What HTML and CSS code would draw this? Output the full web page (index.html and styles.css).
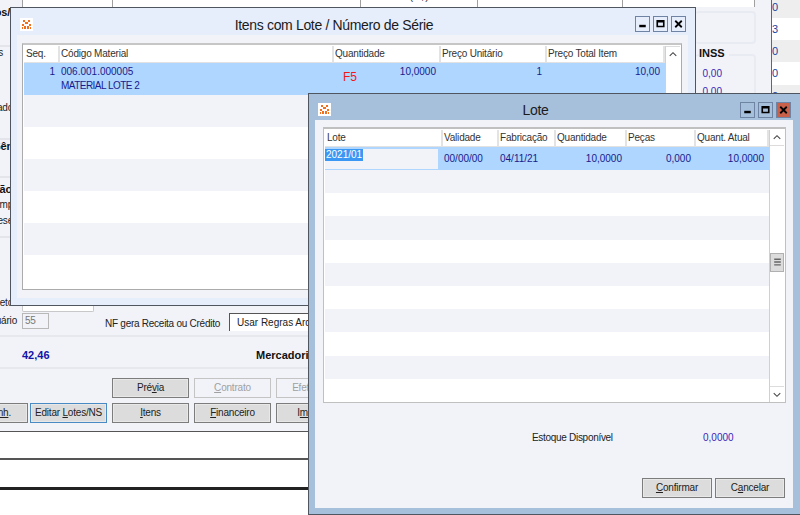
FILE: index.html
```html
<!DOCTYPE html>
<html lang="pt-BR">
<head>
<meta charset="utf-8">
<title>Lote</title>
<link rel="stylesheet" href="styles.css">
</head>
<body>
<div class="desktop">
  <div class="main">
    <section class="panel">
      <div class="topfields">
        <div class="tf tf1"></div>
        <div class="tf tf2"></div>
        <div class="tf tf3"><span class="tf-text">(R$)</span></div>
        <div class="tf tf4"></div>
        <div class="tf tf5"></div>
      </div>
      <div class="upper">
        <div class="frags">
          <div class="frag frag-a b">Impostos/</div>
          <div class="rule rule-a"></div>
          <div class="frag frag-b">Totais</div>
          <div class="frag frag-c">Parcelado</div>
          <div class="rule rule-c"></div>
          <div class="frag frag-d b">Gên</div>
          <div class="rule rule-d"></div>
          <div class="frag frag-e b">Situação</div>
          <div class="frag frag-f">Imp</div>
          <div class="frag frag-g">Rese</div>
          <div class="rule rule-g"></div>
          <div class="frag frag-h">Objeto</div>
        </div>
        <div class="stub"></div>
        <div class="side">
          <div class="gbox gbox-1"></div>
          <div class="gbox gbox-2">
            <div class="legend">INSS</div>
            <div class="val">0,00</div>
            <div class="val">0,00</div>
          </div>
        </div>
      </div>
      <div class="formrow">
        <span class="form-label">Usuário</span>
        <span class="mini-input">55</span>
        <span class="nf-label">NF gera Receita ou Crédito</span>
        <span class="select">Usar Regras Arquivo</span>
      </div>
      <div class="totals">
        <span class="tot-value">42,46</span>
        <span class="tot-label">Mercadorias</span>
      </div>
      <div class="actions">
        <span></span>
        <span></span>
        <button class="btn">Pré<u>v</u>ia</button>
        <button class="btn off"><u>C</u>ontrato</button>
        <button class="btn off">Efetivação</button>
        <button class="btn btn-cut">Ger. Fi<u>nh</u>.</button>
        <button class="btn focus">Editar <u>L</u>otes/NS</button>
        <button class="btn"><u>I</u>tens</button>
        <button class="btn"><u>F</u>inanceiro</button>
        <button class="btn">I<u>m</u>primir</button>
      </div>
    </section>
    <div class="stripes">
      <div class="st st-1 alt">0</div>
      <div class="st">3</div>
      <div class="st alt">0</div>
      <div class="st">0</div>
      <div class="st alt">0</div>
    </div>
  </div>
  <div class="strip"></div>
  <div class="strip strip-last"></div>

  <section class="win win-items">
    <header class="titlebar">
      <svg class="logo" viewBox="0 0 13 13"><rect width="13" height="13" fill="#fff"/><path d="M3 2h2v2H3zM8 2h2v2H8zM5 4h3v2H5zM2 6h2v2H2zM9 6h2v2H9zM4 8h2v3H4zM7 8h2v3H7zM2 9h1v2H2zM10 9h1v2h-1z" fill="#f36f1d"/></svg>
      <h1 class="wintitle">Itens com Lote / Número de Série</h1>
      <div class="controls">
        <span class="ctl"><svg viewBox="0 0 16 16"><rect x="4" y="9" width="8" height="3"/></svg></span>
        <span class="ctl"><svg viewBox="0 0 16 16"><path d="M3 3h10v9H3zM5 6v4h6V6z" fill-rule="evenodd"/></svg></span>
        <span class="ctl"><svg viewBox="0 0 16 16"><path d="M4 4l8 8M12 4l-8 8" stroke="#000" stroke-width="2.2"/></svg></span>
      </div>
    </header>
    <div class="winbody items-body">
      <div class="grid items-grid">
        <div class="tbl">
          <div class="row head">
            <div>Seq.</div><div>Código Material</div><div>Quantidade</div><div>Preço Unitário</div><div>Preço Total Item</div>
          </div>
          <div class="row data sel">
            <div class="num">1</div>
            <div>006.001.000005<br><span class="caps">MATERIAL LOTE 2</span></div>
            <div class="num qty">10,0000<span class="f5">F5</span></div>
            <div class="num">1</div>
            <div class="num">10,00</div>
          </div>
          <div class="row data alt"></div>
          <div class="row data"></div>
          <div class="row data alt"></div>
          <div class="row data"></div>
          <div class="row data alt"></div>
          <div class="row data last"></div>
        </div>
        <div class="sb">
          <span class="sb-btn"><svg viewBox="0 0 15 15"><path d="M4 9l3.5-3.500L11 9" fill="none" stroke="#444" stroke-width="1.100"/></svg></span>
        </div>
      </div>
    </div>
  </section>

  <section class="win win-lote">
    <header class="titlebar">
      <svg class="logo" viewBox="0 0 13 13"><rect width="13" height="13" fill="#fff"/><path d="M3 2h2v2H3zM8 2h2v2H8zM5 4h3v2H5zM2 6h2v2H2zM9 6h2v2H9zM4 8h2v3H4zM7 8h2v3H7zM2 9h1v2H2zM10 9h1v2h-1z" fill="#f36f1d"/></svg>
      <h1 class="wintitle">Lote</h1>
      <div class="controls">
        <span class="ctl"><svg viewBox="0 0 16 16"><rect x="4" y="9" width="8" height="3"/></svg></span>
        <span class="ctl"><svg viewBox="0 0 16 16"><path d="M3 3h10v9H3zM5 6v4h6V6z" fill-rule="evenodd"/></svg></span>
        <span class="ctl ctl-close"><svg viewBox="0 0 16 16"><path d="M4 4l8 8M12 4l-8 8" stroke="#000" stroke-width="2.2"/></svg></span>
      </div>
    </header>
    <div class="winbody lote-body">
      <div class="grid lote-grid">
        <div class="tbl">
          <div class="row head">
            <div>Lote</div><div>Validade</div><div>Fabricação</div><div>Quantidade</div><div>Peças</div><div>Quant. Atual</div>
          </div>
          <div class="row data sel">
            <div class="edit"><span class="picked">2021/01</span></div>
            <div>00/00/00</div>
            <div>04/11/21</div>
            <div class="num">10,0000</div>
            <div class="num">0,000</div>
            <div class="num">10,0000</div>
          </div>
          <div class="bands">
            <div class="band alt"></div><div class="band"></div>
            <div class="band alt"></div><div class="band"></div>
            <div class="band alt"></div><div class="band"></div>
            <div class="band alt"></div><div class="band"></div>
            <div class="band alt"></div><div class="band"></div>
          </div>
        </div>
        <div class="sb">
          <span class="sb-btn"><svg viewBox="0 0 15 15"><path d="M4 9l3.500-3.500L11 9" fill="none" stroke="#444" stroke-width="1.100"/></svg></span>
          <div class="sb-track">
            <span class="thumb"><svg viewBox="0 0 13 18"><path d="M3 5.500h7M3 8.500h7M3 11.500h7" stroke="#666" stroke-width="1.500"/></svg></span>
          </div>
          <span class="sb-btn"><svg viewBox="0 0 15 15"><path d="M4 6l3.500 3.500L11 6" fill="none" stroke="#444" stroke-width="1.100"/></svg></span>
        </div>
      </div>
      <div class="stock">
        <span class="stock-label">Estoque Disponível</span>
        <span class="stock-value">0,0000</span>
      </div>
      <div class="dlg-actions">
        <button class="btn"><u>C</u>onfirmar</button>
        <button class="btn">C<u>a</u>ncelar</button>
      </div>
    </div>
  </section>
</div>
</body>
</html>
```

FILE: styles.css
```css
* { box-sizing: border-box; }
html, body { margin: 0; padding: 0; background: #fff; }
body { font: 10px/14px "Liberation Sans", Arial, sans-serif; color: #222; letter-spacing: -0.2px; }
u { text-decoration: underline; }
.b { font-weight: bold; font-size: 11px; color: #111; }

.desktop { position: relative; width: 800px; height: 515px; overflow: hidden; background: #fff; }
.main { display: flex; height: 432px; }

/* background form */
.panel { width: 772px; height: 432px; background: #f1f3f9; border-right: 1px solid #666; border-bottom: 1px solid #555; display: flex; flex-direction: column; }
.topfields { display: flex; height: 7px; padding-left: 22px; flex: none; }
.tf { background: #fff; border-left: 1px solid #a0a0a0; height: 7px; overflow: hidden; }
.tf1 { width: 90px; }
.tf2 { width: 248px; }
.tf3 { width: 117px; text-align: center; }
.tf4 { width: 145px; }
.tf5 { width: 133px; border-right: 1px solid #a0a0a0; }
.tf-text { display: block; margin-top: -10px; }

.upper { display: flex; height: 304px; flex: none; }
.frags { width: 22px; flex: none; overflow: hidden; }
.frag { width: 13px; display: flex; justify-content: flex-end; white-space: nowrap; height: 12px; line-height: 12px; }
.rule { height: 2px; width: 22px; background: #e3e5ea; }
.frag-a { width: 10px; height: 10px; line-height: 10px; }
.rule-a { margin-top: 28px; }
.frag-b { width: 3px; }
.frag-c { margin-top: 43px; }
.rule-c { margin-top: 24px; }
.rule-d { margin-top: 24px; }
.frag-e { margin-top: 5px; width: 12px; }
.frag-f { margin-top: 4px; }
.frag-g { margin-top: 4px; }
.rule-g { margin-top: 9px; }
.frag-h { margin-top: 59px; }
.stub { width: 72px; height: 6px; align-self: flex-end; background: #fff; border: 1px solid #c8c8c8; border-top: 0; border-radius: 0 0 2px 2px; flex: none; margin-bottom: -1px; }
.side { margin-left: auto; width: 76px; padding-top: 4px; flex: none; }
.gbox { width: 61px; border: 2px solid #e9ebf2; border-radius: 4px; border-left: 0; }
.gbox-1 { height: 33px; }
.gbox-2 { height: 120px; margin-top: 10px; }
.legend { font-weight: bold; font-size: 11px; line-height: 12px; margin: -9px 0 0 4px; width: 30px; background: #f1f3f9; color: #111; letter-spacing: 0; }
.val { color: #3a1fb8; text-align: right; width: 27px; line-height: 18px; letter-spacing: 0; }
.gbox-2 .legend + .val { margin-top: 6px; }

.formrow { height: 26px; flex: none; display: flex; align-items: flex-start; padding-top: 2px; border-bottom: 2px solid #e6e8ee; overflow: hidden; position: relative; }
.form-label { width: 17px; flex: none; display: flex; justify-content: flex-end; white-space: nowrap; line-height: 16px; }
.mini-input { width: 27px; height: 16px; margin-left: 5px; border: 1px solid #b8b8b8; background: #f1f3f9; color: #777; padding-left: 2px; line-height: 14px; flex: none; }
.nf-label { margin-left: 56px; width: 124px; flex: none; line-height: 18px; padding-top: 2px; white-space: nowrap; letter-spacing: -0.26px; }
.select { width: 120px; height: 18px; border: 1px solid #555; border-bottom: 0; background: #fff; padding-left: 7px; line-height: 18px; white-space: nowrap; overflow: hidden; flex: none; letter-spacing: 0; }

.totals { height: 32px; flex: none; display: flex; align-items: center; padding: 6px 0 0 22px; border-bottom: 2px solid #e6e8ee; font-weight: bold; font-size: 11px; letter-spacing: 0; }
.tot-value { color: #1414a8; width: 234px; flex: none; }
.tot-label { color: #111; white-space: nowrap; }

.actions { display: grid; grid-template-columns: 30px 82px 82px 82px 82px; grid-auto-rows: 20px; row-gap: 5px; padding-top: 9px; }
.btn { font: inherit; letter-spacing: inherit; color: #222; height: 20px; width: 77px; padding: 0; background: #dcdcdc; border: 1px solid #7c7c7c; box-shadow: inset 0 0 0 1px #e8e8e8; white-space: nowrap; overflow: hidden; }
.btn.off { background: #f1f3f9; border-color: #c4c4c4; color: #a0a0a0; box-shadow: none; }
.btn.focus { border-color: #4a8ac4; }
.btn.btn-cut { width: 78px; margin-left: -50px; text-align: right; padding-right: 16px; }

/* stripes to the right */
.stripes { flex: 1; display: flex; flex-direction: column; background: #fff; overflow: hidden; }
.st { height: 22.400px; line-height: 22px; color: #1a3f9e; font-size: 11px; flex: none; letter-spacing: 0; }
.st-1 { height: 17.500px; line-height: 15px; }
.st.alt { background: #eeeeee; }

.strip { height: 28px; border-bottom: 2px solid #555; background: #fff; }
.strip-last { height: 30px; border-bottom: 3px solid #222; }

/* windows */
.win { position: absolute; display: flex; flex-direction: column; border: 1px solid #4f5660; }
.win-items { left: 10px; top: 7px; width: 686px; height: 299px; background: #e6eefb; }
.win-lote { left: 308px; top: 93px; width: 493px; height: 422px; background: #a6bfdb; }
.titlebar { display: flex; align-items: center; padding: 5px 9px 0; flex: none; }
.win-items .titlebar { height: 27px; }
.win-lote .titlebar { height: 26px; }
.logo { width: 13px; height: 13px; flex: none; }
.wintitle { flex: 1; margin: 0; text-align: center; font-weight: normal; font-size: 14px; line-height: 18px; letter-spacing: -0.34px; color: #1b1b1b; }
.win-items .wintitle { padding-top: 2px; }
.controls { display: flex; gap: 3px; flex: none; }
.ctl { width: 15px; height: 16px; border: 1px solid #6f84a3; display: block; }
.ctl svg { display: block; width: 13px; height: 14px; }
.ctl-close { background: #c9604a; }

.winbody { background: #f1f3f9; margin: 0 7px 7px 6px; flex: 1; display: flex; flex-direction: column; }
.items-body { padding: 8px 6px 0 5px; }
.lote-body { margin-bottom: 6px; margin-right: 7px; padding: 7px 0 0 8px; }

.grid { display: flex; background: #fff; border: 1px solid #ababab; border-top-width: 2px; border-top-color: #c6c6c6; padding: 1px 0 0 1px; flex: none; }
.items-grid { height: 247px; width: 660px; }
.lote-grid { height: 276px; width: 463px; border-color: #c0c0c0; }
.tbl { display: flex; flex-direction: column; flex: none; }
.items-grid .tbl { width: 641px; --cols: 36px 274px 107px 106px 118px; }
.lote-grid .tbl { width: 444px; --cols: 118px 56px 57px 71px 69px 73px; }
.row { display: grid; grid-template-columns: var(--cols); flex: none; }
.head { height: 17px; border-bottom: 1px solid #e2e2e2; color: #333; }
.head > div { border-right: 2px solid #e3e3e3; padding-left: 1px; line-height: 16px; white-space: nowrap; overflow: hidden; }
.head > div:first-child { padding-left: 2px; }
.data { height: 32px; letter-spacing: 0; }
.items-grid .data > div { padding: 2px 1px 0; }
.items-grid .last { height: 33px; }
.sel { background: #aed6fe; color: #1a1a8c; }
.caps { letter-spacing: -0.53px; }
.alt { background: #f1f3f9; }
.num { text-align: right; padding-right: 5px !important; }
.qty { position: relative; }
.f5 { position: absolute; left: 9px; top: 7px; color: #f01818; font-size: 12px; letter-spacing: 0; }
.lote-grid .sel { height: 23px; }
.lote-grid .data > div { line-height: 23px; padding-left: 1px; }
.lote-grid .data > .edit { margin: 2px 5px 1px 0; background: #f1f3f9; padding: 0; line-height: 12px; height: 20px; }
.picked { display: inline-block; background: #3a97f4; color: #fff; padding: 0 1px; }
.bands { flex: 1; display: flex; flex-direction: column; }
.band { flex: 1; }

.sb { width: 15px; display: flex; flex-direction: column; flex: none; border-left: 1px solid #d0d0d0; background: #fff; }
.sb-btn { height: 16px; display: block; flex: none; border-bottom: 1px solid #dcdcdc; }
.sb-btn:last-child { border-bottom: 0; border-top: 1px solid #dcdcdc; }
.sb-btn svg { display: block; width: 14px; height: 15px; }
.sb-track { flex: 1; padding-top: 107px; }
.thumb { display: block; height: 19px; background: #dcdcdc; border: 1px solid #b0b0b0; }
.thumb svg { display: block; width: 13px; height: 17px; }

.stock { display: flex; margin-top: 28px; padding-left: 209px; height: 14px; flex: none; }
.stock-label { width: 171px; flex: none; letter-spacing: -0.3px; white-space: nowrap; }
.stock-value { width: 30px; text-align: right; color: #3a1fb8; white-space: nowrap; letter-spacing: 0; }
.dlg-actions { display: flex; justify-content: flex-end; gap: 3px; margin-top: 33px; padding-right: 8px; }
.dlg-actions .btn { width: 70px; }
```
